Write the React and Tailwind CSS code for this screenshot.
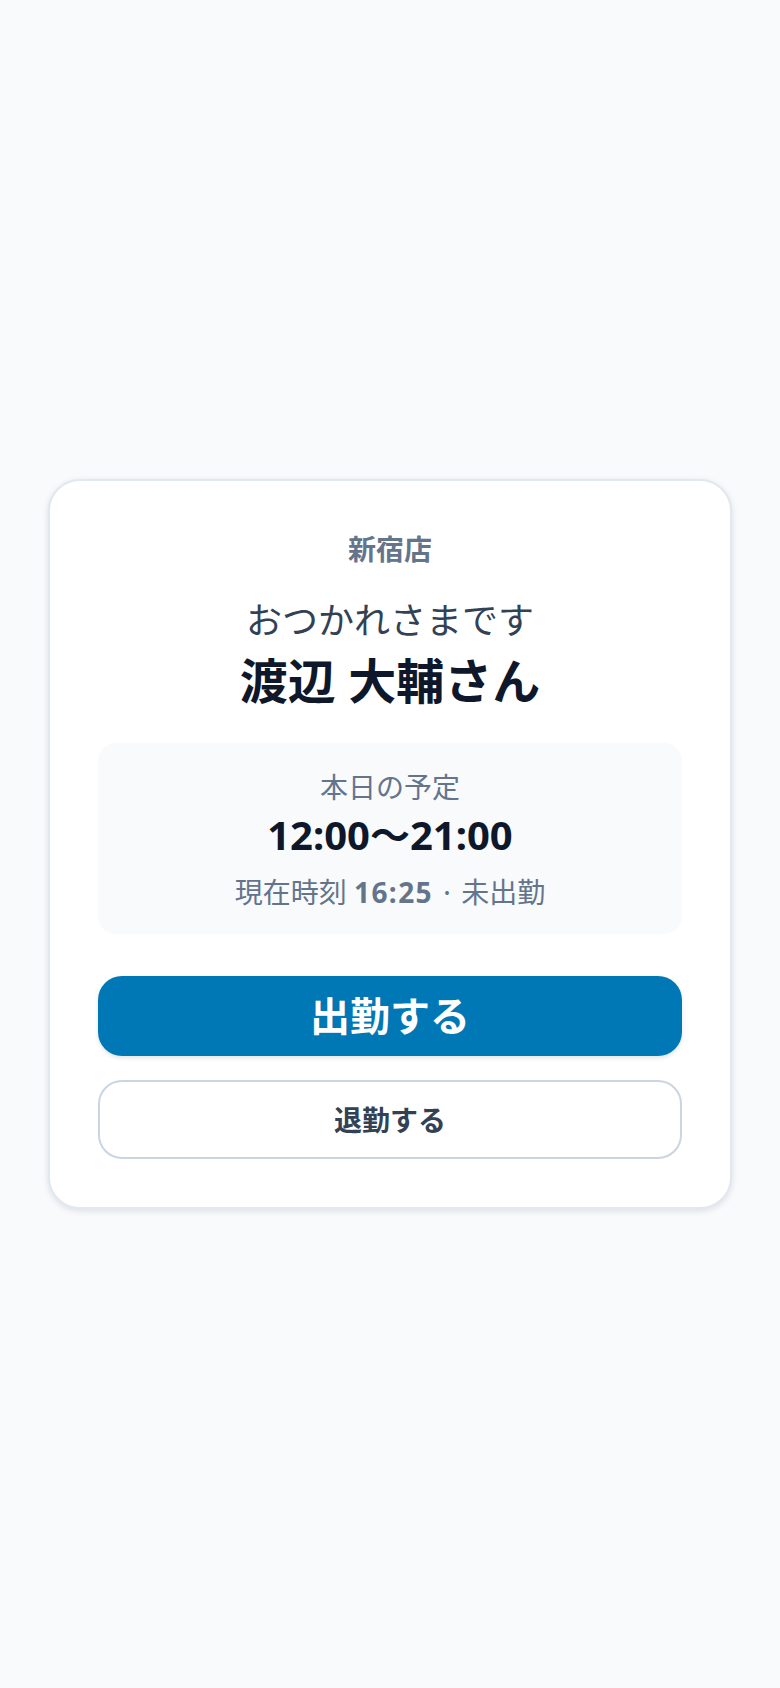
export default function App() {
  return (
    <div
      className="min-h-screen bg-[#f8fafc] flex items-center justify-center px-12"
      style={{ fontFamily: '"Noto Sans", "Noto Sans CJK JP", sans-serif' }}
    >
      <div className="w-full bg-white border-2 border-[#e2e8f0] rounded-[32px] shadow-[0_2px_6px_rgba(15,23,42,0.12)] p-12 text-center">
        <p className="text-[28px] leading-[40px] font-semibold text-[#64748b]">新宿店</p>

        <p className="mt-6 text-[36px] leading-[56px] text-[#334155]">おつかれさまです</p>
        <h1 className="text-[48px] leading-[64px] font-bold text-[#0f172a]">渡辺 大輔さん</h1>

        <div className="mt-[30px] bg-[#f8fafc] rounded-[18px] pt-6 pb-[22px]">
          <p className="text-[28px] leading-[40px] text-[#64748b]">本日の予定</p>
          <p className="text-[40px] leading-[56px] font-bold text-[#0f172a]">12:00〜21:00</p>
          <p className="mt-2 text-[28px] leading-[40px] text-[#64748b]">
            現在時刻 <span className="font-bold tracking-wider">16:25</span>
            <span className="font-['Noto_Sans_CJK_JP']"> · </span>未出勤
          </p>
        </div>

        <button
          type="button"
          className="mt-[42px] w-full bg-[#0078b5] text-white rounded-[24px] py-3 text-[40px] leading-[56px] font-bold shadow-[0_2px_4px_rgba(15,23,42,0.12)]"
        >
          出勤する
        </button>
        <button
          type="button"
          className="mt-6 w-full h-[79px] flex items-center justify-center bg-white border-2 border-[#cbd5e1] rounded-[24px] text-[28px] leading-[40px] font-bold text-[#334155]"
        >
          退勤する
        </button>
      </div>
    </div>
  );
}
